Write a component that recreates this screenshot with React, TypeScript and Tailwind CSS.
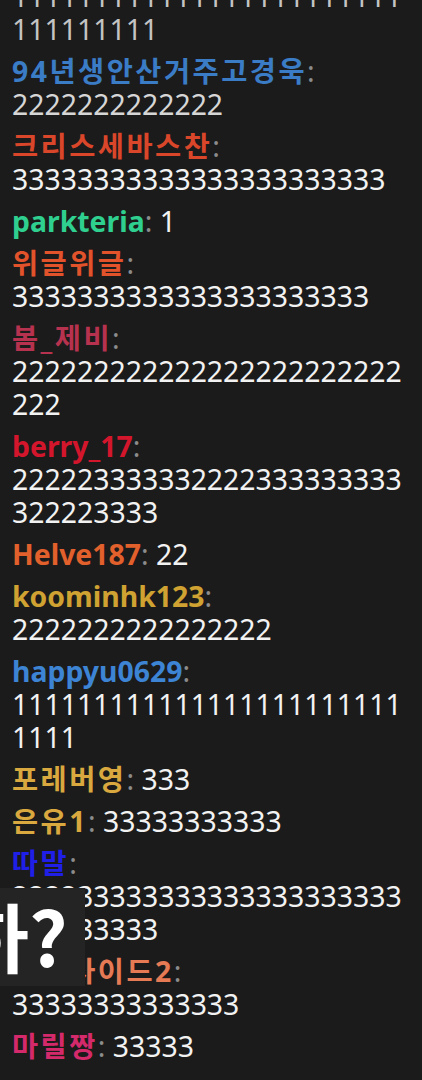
import React from 'react'

type Msg = { name?: string; color?: string; text: string; tone?: string }

const MESSAGES: Msg[] = [
  { text: '111111111111111111111111111111111', tone: 'text-[#c4c4c4]' },
  { name: '94년생안산거주고경욱', color: 'text-[#3b7cc6]', text: '2222222222222', tone: 'text-[#d6d6d6]' },
  { name: '크리스세바스찬', color: 'text-[#d9462a]', text: '33333333333333333333333' },
  { name: 'parkteria', color: 'text-[#2fd08f]', text: '1' },
  { name: '위글위글', color: 'text-[#e2532b]', text: '3333333333333333333333' },
  { name: '봄_제비', color: 'text-[#b7324e]', text: '222222222222222222222222222' },
  { name: 'berry_17', color: 'text-[#d4162d]', text: '222223333332222333333333322223333' },
  { name: 'Helve187', color: 'text-[#e2602c]', text: '22' },
  { name: 'koominhk123', color: 'text-[#cfa232]', text: '2222222222222222' },
  { name: 'happyu0629', color: 'text-[#3d84d4]', text: '1111111111111111111111111111' },
  { name: '포레버영', color: 'text-[#d9a83f]', text: '333' },
  { name: '은유1', color: 'text-[#d9a83f]', text: '33333333333' },
  { name: '따말', color: 'text-[#1f1fe8]', text: '222233333333333333333333333333333' },
  { name: '아웃사이드2', color: 'text-[#e57a55]', text: '33333333333333' },
  { name: '마릴짱', color: 'text-[#d42a6c]', text: '33333' },
]

// hangul nicks render wider in the source font
const isHangul = (s: string) => /[\uac00-\ud7a3]/.test(s)

export default function App() {
  return (
    <div className="relative h-[1080px] w-[422px] overflow-hidden bg-[#1b1b1b] font-['Noto_Sans','Noto_Sans_CJK_KR',sans-serif] text-[28.4px] leading-[33px]">
      {/* chat log */}
      <div className="-mt-[20px] flex flex-col gap-[9px] pl-3 pr-[18px]">
        {MESSAGES.map((m, i) => (
          <p key={i} className="[overflow-wrap:break-word]">
            {m.name && (
              <>
                <span className={`font-bold ${m.color} ${isHangul(m.name) ? 'tracking-[2.5px]' : ''}`}>{m.name}</span>
                <span className="text-[#8c8c8c]">:</span>{' '}
              </>
            )}
            <span className={m.tone ?? 'text-[#f2f2f2]'}>{m.text}</span>
          </p>
        ))}
      </div>

      {/* caption overlay */}
      <div className="absolute left-0 top-[888px] h-[98px] w-[85px] overflow-hidden bg-[#242424]">
        <span className="-ml-[40px] mt-[2px] block whitespace-nowrap font-['Noto_Sans_CJK_KR',sans-serif] text-[75px] font-bold leading-[90px] text-white">
          하?
        </span>
      </div>
    </div>
  )
}
